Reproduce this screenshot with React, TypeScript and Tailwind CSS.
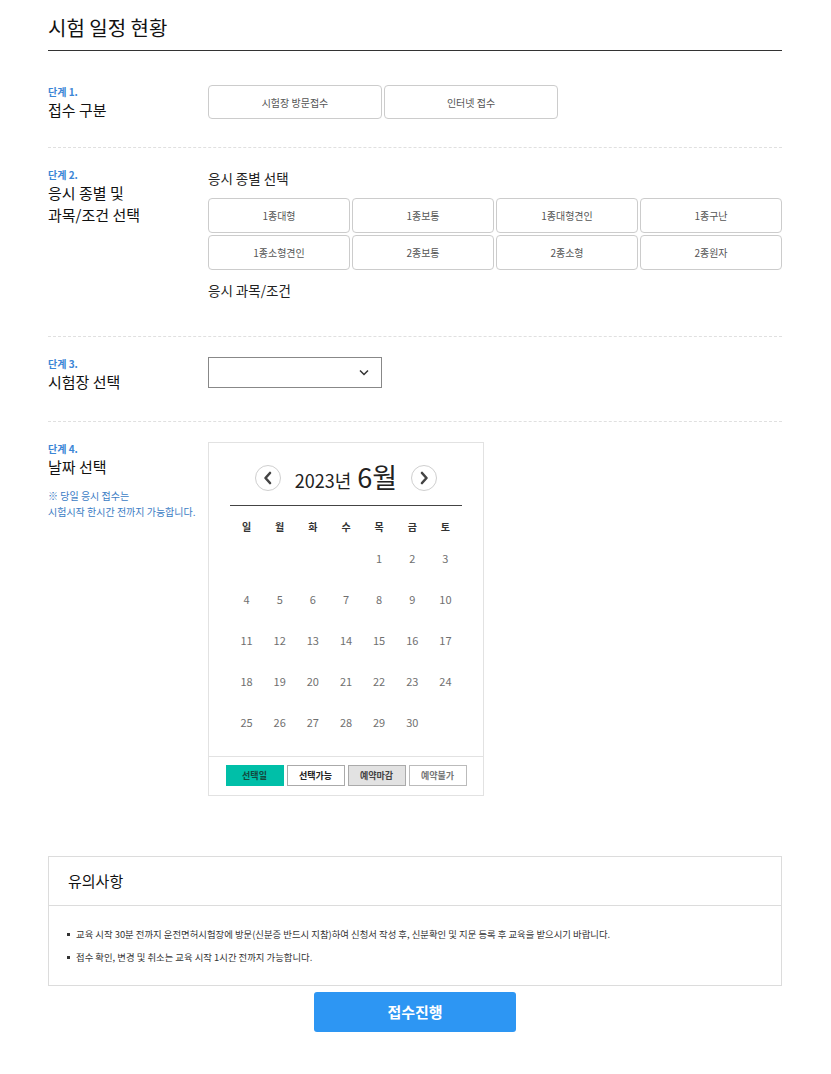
import React from "react";

const font = { fontFamily: '"Noto Sans CJK KR", "Noto Sans", sans-serif' };

function StepLabel({ n, title, children }: { n: number; title: React.ReactNode; children?: React.ReactNode }) {
  return (
    <div className="w-[160px] shrink-0">
      <div className="text-[10px] leading-[14px] text-[#3b86d6] font-bold">단계 {n}.</div>
      <div className="text-[15px] leading-[22px] text-[#111]">{title}</div>
      {children}
    </div>
  );
}

const kinds = ["1종대형", "1종보통", "1종대형견인", "1종구난", "1종소형견인", "2종보통", "2종소형", "2종원자"];

function Chevron({ dir }: { dir: "left" | "right" }) {
  return (
    <div className="w-[26px] h-[26px] rounded-full border border-[#cfcfcf] flex items-center justify-center bg-white">
      <svg width="12" height="14" viewBox="0 0 12 14">
        {dir === "left" ? (
          <path d="M8 2 L3.5 7 L8 12" fill="none" stroke="#444" strokeWidth="2.6" strokeLinecap="round" strokeLinejoin="round" />
        ) : (
          <path d="M4 2 L8.5 7 L4 12" fill="none" stroke="#444" strokeWidth="2.6" strokeLinecap="round" strokeLinejoin="round" />
        )}
      </svg>
    </div>
  );
}

function Calendar() {
  const days: (number | null)[] = [null, null, null, null];
  for (let i = 1; i <= 30; i++) days.push(i);
  while (days.length % 7) days.push(null);
  const weeks: (number | null)[][] = [];
  for (let i = 0; i < days.length; i += 7) weeks.push(days.slice(i, i + 7));
  const wd = ["일", "월", "화", "수", "목", "금", "토"];
  return (
    <div className="w-[276px] border border-[#e2e2e2] bg-white">
      <div className="px-[21px]">
        <div className="pt-[20px] pb-[12px] border-b border-[#444] flex items-center justify-center gap-[14px] h-[63px]">
          <Chevron dir="left" />
          <div className="flex items-baseline gap-[6px] text-[#222]">
            <span className="text-[18px]">2023년</span>
            <span className="text-[27px] leading-none">6월</span>
          </div>
          <Chevron dir="right" />
        </div>
        <div className="grid grid-cols-7 pt-[10px] h-[32px]">
          {wd.map((w) => (
            <div key={w} className="text-center text-[10px] leading-[22px] font-bold text-[#333]">{w}</div>
          ))}
        </div>
        <div className="pb-[13px]">
          {weeks.map((wk, i) => (
            <div key={i} className="grid grid-cols-7 h-[41px]">
              {wk.map((d, j) => (
                <div key={j} className="text-center text-[11px] leading-[41px] text-[#707070]">{d ?? ""}</div>
              ))}
            </div>
          ))}
        </div>
      </div>
      <div className="border-t border-[#e2e2e2] pt-[8px] pb-[9px] flex justify-center gap-[3px]">
        <div className="w-[58px] h-[21px] bg-[#00bfa8] text-[#134a40] text-[9px] font-bold flex items-center justify-center">선택일</div>
        <div className="w-[58px] h-[21px] bg-white border border-[#aaa] text-[#222] text-[9px] font-bold flex items-center justify-center">선택가능</div>
        <div className="w-[58px] h-[21px] bg-[#e2e2e2] border border-[#aaa] text-[#444] text-[9px] font-bold flex items-center justify-center">예약마감</div>
        <div className="w-[58px] h-[21px] bg-white border border-[#bbb] text-[#777] text-[9px] font-bold flex items-center justify-center">예약불가</div>
      </div>
    </div>
  );
}

export default function App() {
  return (
    <div className="w-[831px] bg-white pl-[48px] pr-[49px] pb-[40px]" style={font}>
      <div className="h-[51px] border-b border-[#333] flex items-center pt-[5px]">
        <h1 className="text-[20px] text-[#111]">시험 일정 현황</h1>
      </div>

      <div className="flex pt-[34px] pb-[26px] border-b border-dashed border-[#e0e0e0]">
        <StepLabel n={1} title="접수 구분" />
        <div className="flex gap-[2px]">
          <button className="w-[174px] h-[34px] border border-[#ccc] rounded-[4px] text-[10px] text-[#555] bg-white">시험장 방문접수</button>
          <button className="w-[174px] h-[34px] border border-[#ccc] rounded-[4px] text-[10px] text-[#555] bg-white">인터넷 접수</button>
        </div>
      </div>

      <div className="flex pt-[20px] pb-[36px] border-b border-dashed border-[#e0e0e0]">
        <StepLabel n={2} title={<>응시 종별 및<br />과목/조건 선택</>} />
        <div className="flex-1">
          <div className="text-[13.5px] leading-[20px] text-[#222]">응시 종별 선택</div>
          <div className="grid grid-cols-4 gap-[2px] mt-[10px]">
            {kinds.map((k) => (
              <button key={k} className="h-[35px] border border-[#ccc] rounded-[4px] text-[10px] text-[#555] bg-white">{k}</button>
            ))}
          </div>
          <div className="text-[13.5px] leading-[20px] text-[#222] mt-[10px]">응시 과목/조건</div>
        </div>
      </div>

      <div className="flex pt-[20px] pb-[28px] border-b border-dashed border-[#e0e0e0]">
        <StepLabel n={3} title="시험장 선택" />
        <div className="w-[174px] h-[31px] border border-[#888] flex items-center justify-end pr-[12px]">
          <svg width="10" height="7" viewBox="0 0 10 7">
            <path d="M1 1.5 L5 5.5 L9 1.5" fill="none" stroke="#333" strokeWidth="1.5" />
          </svg>
        </div>
      </div>

      <div className="flex pt-[20px] pb-[60px]">
        <StepLabel n={4} title="날짜 선택">
          <div className="mt-[10px] text-[10px] leading-[16px] text-[#3b7cc4]">
            ※ 당일 응시 접수는<br />시험시작 한시간 전까지 가능합니다.
          </div>
        </StepLabel>
        <Calendar />
      </div>

      <div className="border border-[#dcdcdc]">
        <div className="h-[49px] border-b border-[#dcdcdc] flex items-center pl-[19px] text-[15px] text-[#111]">유의사항</div>
        <ul className="pt-[20px] pb-[20px] pl-[18px] text-[9.4px] leading-[16px] text-[#333] flex flex-col gap-[7px]">
          <li className="flex items-center gap-[6px]"><span className="w-[3px] h-[3px] bg-[#333] inline-block" />교육 시작 30분 전까지 운전면허시험장에 방문(신분증 반드시 지참)하여 신청서 작성 후, 신분확인 및 지문 등록 후 교육을 받으시기 바랍니다.</li>
          <li className="flex items-center gap-[6px]"><span className="w-[3px] h-[3px] bg-[#333] inline-block" />접수 확인, 변경 및 취소는 교육 시작 1시간 전까지 가능합니다.</li>
        </ul>
      </div>

      <div className="flex justify-center mt-[6px]">
        <button className="w-[202px] h-[40px] rounded-[3px] bg-[#2d96f3] text-white text-[15px] font-bold">접수진행</button>
      </div>
    </div>
  );
}
